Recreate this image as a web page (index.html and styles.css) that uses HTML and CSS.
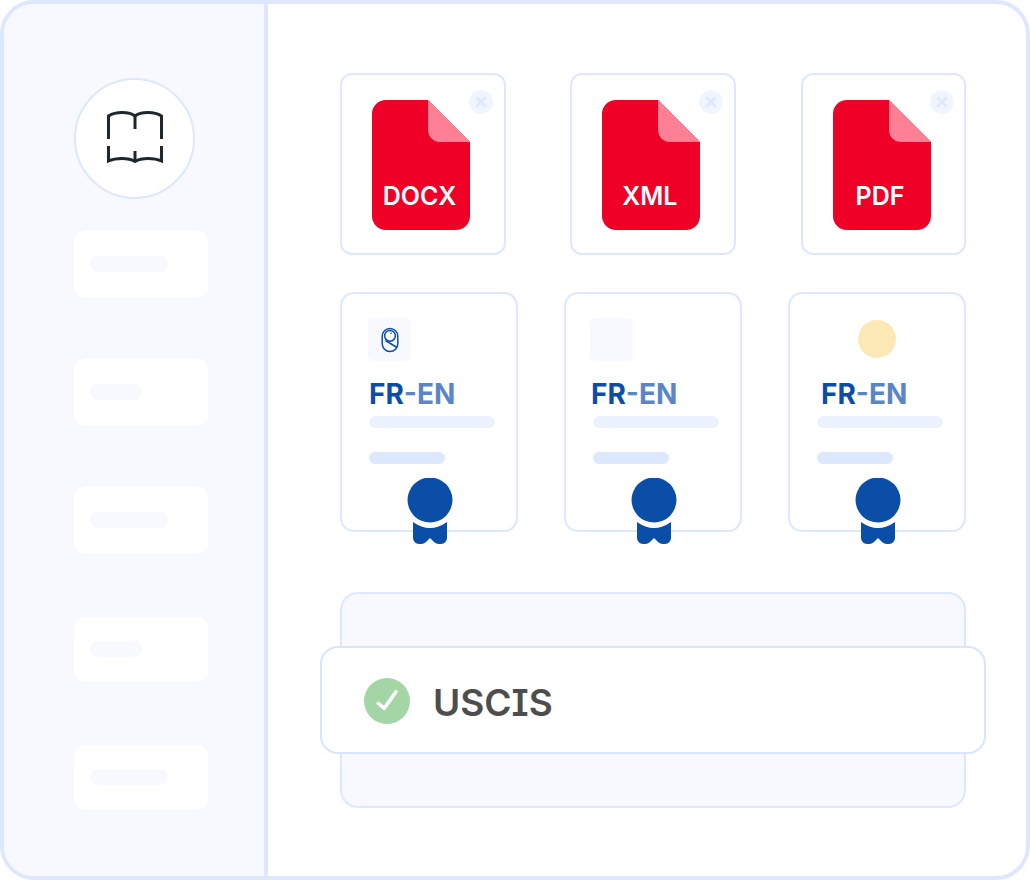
FILE: index.html
```html
<!DOCTYPE html>
<html lang="en">
<head>
<meta charset="utf-8">
<title>Translation dashboard</title>
<link rel="stylesheet" href="styles.css">
</head>
<body>
<div class="frame">
  <aside class="sidebar">
    <div class="avatar">
      <svg class="book" width="60" height="60" viewBox="0 0 60 60" fill="none" stroke="#1f272e" stroke-width="3">
        <path d="M4.500 31V8Q10 4.500 18 4.500Q27 4.500 31 8Q35 4.500 44 4.500Q52 4.500 57.500 8V31"/>
        <path d="M31 8V21"/>
        <path d="M4.500 38V53Q10 50.500 18 50.500Q26 50.500 31 53.500Q36 50.500 44 50.500Q52 50.500 57.500 53V38"/>
        <path d="M31 43V53"/>
      </svg>
    </div>
    <div class="nav-list">
      <div class="nav-item"><span class="nav-bar"></span></div>
      <div class="nav-item"><span class="nav-bar nav-bar-short"></span></div>
      <div class="nav-item"><span class="nav-bar"></span></div>
      <div class="nav-item nav-item-low"><span class="nav-bar nav-bar-short"></span></div>
      <div class="nav-item nav-item-low"><span class="nav-bar"></span></div>
    </div>
  </aside>
  <main class="main">
    <section class="file-row">
      <div class="file-card">
        <span class="close"><svg width="12" height="12" viewBox="0 0 12 12" stroke="#dfe8fd" stroke-width="2.800" stroke-linecap="round"><path d="M2 2L10 10M10 2L2 10"/></svg></span>
        <div class="file-icon">
          <svg class="file-svg" width="98" height="130" viewBox="0 0 98 130"><path fill="#ef0027" d="M14 0H56L98 42V116A14 14 0 0 1 84 130H14A14 14 0 0 1 0 116V14A14 14 0 0 1 14 0Z"/><path fill="#ff8095" d="M56 0L98 42H68A12 12 0 0 1 56 30Z"/></svg>
          <span class="file-label">DOCX</span>
        </div>
      </div>
      <div class="file-card">
        <span class="close"><svg width="12" height="12" viewBox="0 0 12 12" stroke="#dfe8fd" stroke-width="2.800" stroke-linecap="round"><path d="M2 2L10 10M10 2L2 10"/></svg></span>
        <div class="file-icon">
          <svg class="file-svg" width="98" height="130" viewBox="0 0 98 130"><path fill="#ef0027" d="M14 0H56L98 42V116A14 14 0 0 1 84 130H14A14 14 0 0 1 0 116V14A14 14 0 0 1 14 0Z"/><path fill="#ff8095" d="M56 0L98 42H68A12 12 0 0 1 56 30Z"/></svg>
          <span class="file-label">XML</span>
        </div>
      </div>
      <div class="file-card">
        <span class="close"><svg width="12" height="12" viewBox="0 0 12 12" stroke="#dfe8fd" stroke-width="2.800" stroke-linecap="round"><path d="M2 2L10 10M10 2L2 10"/></svg></span>
        <div class="file-icon">
          <svg class="file-svg" width="98" height="130" viewBox="0 0 98 130"><path fill="#ef0027" d="M14 0H56L98 42V116A14 14 0 0 1 84 130H14A14 14 0 0 1 0 116V14A14 14 0 0 1 14 0Z"/><path fill="#ff8095" d="M56 0L98 42H68A12 12 0 0 1 56 30Z"/></svg>
          <span class="file-label">PDF</span>
        </div>
      </div>
    </section>
    <section class="cert-row">
      <article class="cert-card">
        <div class="cert-top cert-top-a">
          <span class="thumb">
            <svg width="20" height="26" viewBox="0 0 20 26" fill="none" stroke="#0b4ea8" stroke-width="1.500"><rect x="2.200" y="1.500" width="15.600" height="23" rx="7.800"/><circle cx="10" cy="8.800" r="5.400"/><path d="M5.500 13.500L17 20.500"/><path d="M10.500 6.500L12 6" stroke-width="1"/></svg>
          </span>
        </div>
        <h3 class="pair">FR<span class="pair-light">-EN</span></h3>
        <span class="line line-long"></span>
        <span class="line line-short"></span>
        <svg class="badge" width="46" height="66" viewBox="0 0 46 66"><circle cx="23" cy="22" r="22.500" fill="#0b4ea8"/><path fill="#0b4ea8" d="M6 44Q23 56 40 44V60A6 6 0 0 1 34 66H32Q29 66 27 64L23 60L19 64Q17 66 14 66H12A6 6 0 0 1 6 60Z"/></svg>
      </article>
      <article class="cert-card">
        <div class="cert-top cert-top-b"><span class="thumb"></span></div>
        <h3 class="pair pair-b">FR<span class="pair-light">-EN</span></h3>
        <span class="line line-long"></span>
        <span class="line line-short"></span>
        <svg class="badge" width="46" height="66" viewBox="0 0 46 66"><circle cx="23" cy="22" r="22.500" fill="#0b4ea8"/><path fill="#0b4ea8" d="M6 44Q23 56 40 44V60A6 6 0 0 1 34 66H32Q29 66 27 64L23 60L19 64Q17 66 14 66H12A6 6 0 0 1 6 60Z"/></svg>
      </article>
      <article class="cert-card">
        <div class="cert-top cert-top-c"><span class="dot"></span></div>
        <h3 class="pair pair-c">FR<span class="pair-light">-EN</span></h3>
        <span class="line line-long"></span>
        <span class="line line-short"></span>
        <svg class="badge" width="46" height="66" viewBox="0 0 46 66"><circle cx="23" cy="22" r="22.500" fill="#0b4ea8"/><path fill="#0b4ea8" d="M6 44Q23 56 40 44V60A6 6 0 0 1 34 66H32Q29 66 27 64L23 60L19 64Q17 66 14 66H12A6 6 0 0 1 6 60Z"/></svg>
      </article>
    </section>
    <section class="panel">
      <div class="status">
        <svg width="46" height="46" viewBox="0 0 46 46"><circle cx="23" cy="23" r="23" fill="#a3d5a5"/><path d="M14.300 25.300L20.300 30.300L32 13.700" fill="none" stroke="#fff" stroke-width="3.600" stroke-linecap="round" stroke-linejoin="round"/></svg>
        <span class="status-text">USCIS</span>
      </div>
    </section>
  </main>
</div>
</body>
</html>
```
FILE: styles.css
```css
* { box-sizing: border-box; }
html, body { margin: 0; padding: 0; background: #fff; }
body { font-family: "Inter", "Liberation Sans", sans-serif; }

.frame {
  width: 1030px;
  height: 880px;
  border: 4px solid #dde8fe;
  border-radius: 34px;
  display: flex;
  overflow: hidden;
  background: #fff;
}

.sidebar {
  width: 264px;
  flex: none;
  background: #f7f9ff;
  border-right: 4px solid #dde8fe;
  padding: 74px 0 0 70px;
}
.avatar {
  width: 121px;
  height: 121px;
  border-radius: 50%;
  background: #fff;
  border: 2px solid #dde8fe;
  position: relative;
}
.book { position: absolute; left: 28px; top: 28px; overflow: visible; }
.nav-list { margin-top: 32px; display: flex; flex-direction: column; gap: 62px; }
.nav-item {
  width: 134px;
  height: 66px;
  border-radius: 10px;
  background: #fff;
  padding-left: 16px;
  display: flex;
  align-items: center;
}
.nav-item-low { height: 64px; margin-top: 2px; }
.nav-bar { width: 78px; height: 16px; border-radius: 8px; background: #f7f9ff; }
.nav-bar-short { width: 52px; }

.main { flex: 1; padding: 69px 0 0 72px; }

.file-row { display: flex; gap: 64.750px; }
.file-card {
  width: 165.500px;
  height: 182px;
  border: 2px solid #dde8fe;
  border-radius: 12px;
  position: relative;
  padding: 25px 0 0 30.500px;
}
.close {
  position: absolute;
  top: 15px;
  right: 10.500px;
  width: 24px;
  height: 24px;
  border-radius: 50%;
  background: #f1f5fe;
  display: flex;
  align-items: center;
  justify-content: center;
}
.file-icon { width: 98px; height: 130px; position: relative; margin-left: -0.500px; }
.file-svg { display: block; }
.file-label {
  position: absolute;
  left: -3px;
  right: 0;
  top: 81px;
  text-align: center;
  font-size: 25px;
  line-height: 30px;
  font-weight: 600;
  color: #fff;
}

.cert-row { display: flex; gap: 46px; margin-top: 37px; }
.cert-card {
  width: 178px;
  height: 240px;
  border: 2px solid #dde8fe;
  border-radius: 14px;
  position: relative;
  padding: 24px 0 0 27px;
  display: flex;
  flex-direction: column;
}
.cert-top { height: 43px; }
.cert-top-a { margin-left: -1px; }
.cert-top-b { margin-left: -3px; }
.cert-top-c { margin-left: 41px; padding-top: 2px; }
.thumb {
  width: 43px;
  height: 43px;
  border-radius: 5px;
  background: #f7f9ff;
  display: flex;
  align-items: center;
  justify-content: center;
}
.dot { display: block; width: 38px; height: 38px; border-radius: 50%; background: #fce8b4; }
.pair {
  margin: 17px 0 0;
  font-size: 28px;
  line-height: 32px;
  font-weight: 700;
  color: #0b4ea8;
  letter-spacing: 0;
}
.pair-b { margin-left: -2px; }
.pair-c { margin-left: 4px; }
.pair-light { color: #5a86c8; }
.line { display: block; border-radius: 6px; height: 12px; }
.line-long { width: 126px; background: #ebf1fd; margin-top: 6px; }
.line-short { width: 76px; background: #dde8fe; margin-top: 24px; }
.badge { position: absolute; left: 65px; bottom: -14px; }

.panel {
  width: 626px;
  height: 216px;
  margin-top: 60px;
  border: 2px solid #dde8fe;
  border-radius: 18px;
  background: #f7f9ff;
  position: relative;
}
.status {
  position: absolute;
  left: -22px;
  top: 52px;
  width: 666px;
  height: 108px;
  border: 2px solid #d9e5fd;
  border-radius: 18px;
  background: #fff;
  display: flex;
  align-items: center;
  padding: 2px 0 0 42px;
  gap: 23px;
}
.status-text {
  font-size: 37px;
  line-height: 44px;
  font-weight: 600;
  color: #4d4d4d;
  margin-top: 4px;
  font-feature-settings: "cv08" 1;
}
```
